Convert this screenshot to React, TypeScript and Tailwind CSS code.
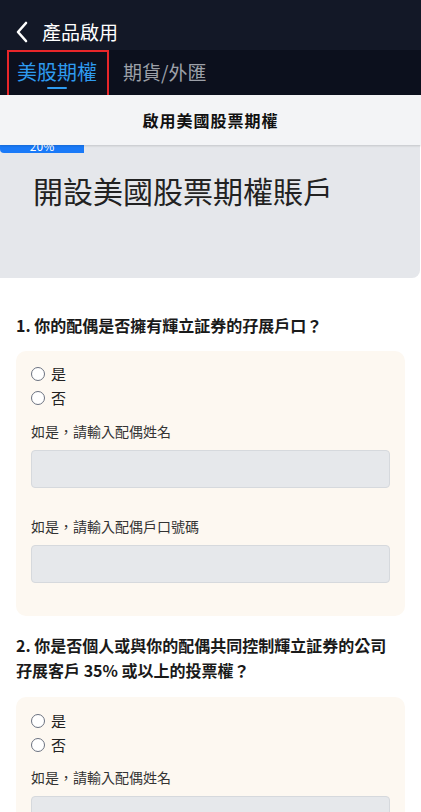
import React from "react";

const font = { fontFamily: '"Noto Sans CJK TC", "Noto Sans", "Liberation Sans", sans-serif' };

function Radio({ label }: { label: string }) {
  return (
    <div className="flex items-center h-[24px]">
      <span className="w-[14px] h-[14px] rounded-full border border-[#6b7280] bg-white" />
      <span className="ml-[6px] text-[15px] text-[#222] leading-[24px]">{label}</span>
    </div>
  );
}

function Field({ label }: { label: string }) {
  return (
    <div>
      <div className="text-[14px] text-[#333] leading-[20px]">{label}</div>
      <div className="mt-[9px] h-[38px] rounded-[4px] bg-[#e6e8eb] border border-[#d6d9dd]" />
    </div>
  );
}

export default function App() {
  return (
    <div className="w-[421px] h-[812px] overflow-hidden bg-white relative" style={font}>
      {/* header */}
      <div className="h-[50px] bg-[#131827] flex items-center pt-[14px] pl-[15px]">
        <svg width="14" height="22" viewBox="0 0 14 22" fill="none">
          <path d="M11 2 L3 11 L11 20" stroke="white" strokeWidth="2.6" strokeLinecap="round" strokeLinejoin="round" />
        </svg>
        <span className="ml-[13px] text-[19px] text-white leading-[24px]">產品啟用</span>
      </div>
      {/* tabs */}
      <div className="h-[45px] bg-[#0c101d] flex items-start pl-[17px]">
        <div className="relative flex flex-col items-center pt-[9px]">
          <span className="text-[20px] leading-[26px] text-[#2e9bf0]">美股期權</span>
          <span className="mt-[2px] w-[20px] h-[2px] bg-[#2e9bf0] rounded" />
        </div>
        <span className="ml-[26px] pt-[9px] text-[19px] leading-[26px] text-[#9ca0a8]">期貨/外匯</span>
      </div>
      {/* red annotation box */}
      <div className="absolute left-[7px] top-[50px] w-[102px] h-[48px] border-2 border-[#e8262a]" />

      {/* sub header */}
      <div className="relative z-10 h-[50px] bg-[#f3f4f6] flex items-center justify-center shadow-[0_1px_2px_rgba(0,0,0,0.15)]">
        <span className="text-[16px] font-bold text-[#111] tracking-[1px]">啟用美國股票期權</span>
      </div>

      {/* gray card */}
      <div className="h-[133px] bg-[#e5e7eb] rounded-br-[8px] mr-[1px]">
        <div className="w-[84px] h-[8px] bg-[#1a7af8] rounded-bl-[4px] overflow-hidden flex justify-center">
          <span className="text-[12px] leading-[12px] text-white -mt-[5px]">20%</span>
        </div>
        <div className="pl-[33px] pt-[19px] text-[30px] leading-[36px] text-[#222]">開設美國股票期權賬戶</div>
      </div>

      {/* question 1 */}
      <div className="px-[16px] pt-[35px]">
        <div className="text-[16px] font-bold text-[#1a1a1a] leading-[24px]">1. 你的配偶是否擁有輝立証券的孖展戶口？</div>
        <div className="mt-[14px] bg-[#fdf8f1] rounded-[10px] px-[15px] pt-[11px] pb-[33px]">
          <Radio label="是" />
          <Radio label="否" />
          <div className="mt-[11px]">
            <Field label="如是，請輸入配偶姓名" />
          </div>
          <div className="mt-[28px]">
            <Field label="如是，請輸入配偶戶口號碼" />
          </div>
        </div>

        {/* question 2 */}
        <div className="mt-[17px] text-[16px] font-bold text-[#1a1a1a] leading-[25px]">
          2. 你是否個人或與你的配偶共同控制輝立証券的公司
          <br />
          孖展客戶 35% 或以上的投票權？
        </div>
        <div className="mt-[14px] bg-[#fdf8f1] rounded-[10px] px-[15px] pt-[12px] pb-[33px]">
          <Radio label="是" />
          <Radio label="否" />
          <div className="mt-[10px]">
            <Field label="如是，請輸入配偶姓名" />
          </div>
        </div>
      </div>
    </div>
  );
}
